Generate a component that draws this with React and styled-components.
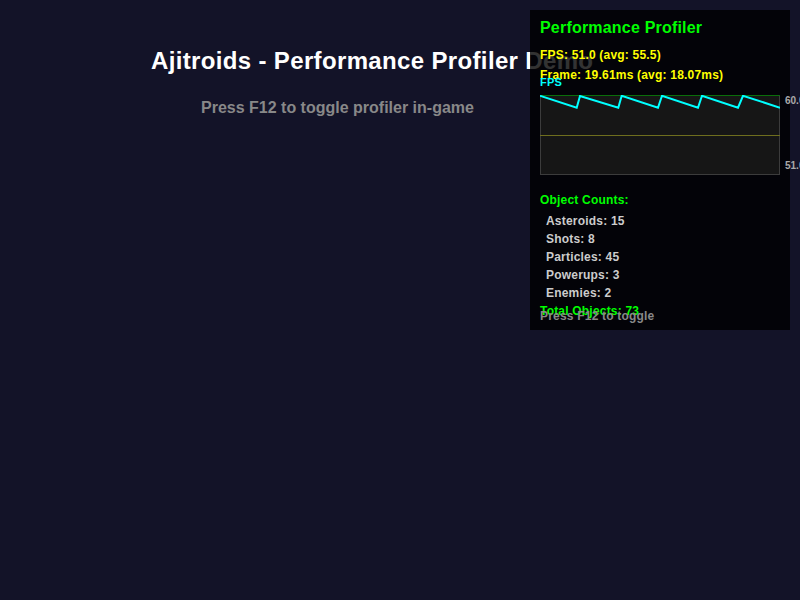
import React from 'react'
import styled, { createGlobalStyle } from 'styled-components'

const GlobalStyle = createGlobalStyle`
  html, body {
    margin: 0;
    padding: 0;
    background: #131328;
    overflow: hidden;
  }
  body {
    font-family: "Liberation Sans", Arial, sans-serif;
  }
`

const Page = styled.div`
  position: relative;
  width: 800px;
  height: 600px;
  overflow: hidden;
  background: #131328;
  padding-top: 40px;
  box-sizing: border-box;
`

const Title = styled.h1`
  margin: 0 0 0 151px;
  height: 42px;
  line-height: 42px;
  font-size: 24px;
  font-weight: bold;
  letter-spacing: 0.35px;
  color: #ffffff;
  white-space: nowrap;
`

const Subtitle = styled.p`
  margin: 0 0 0 201px;
  height: 52px;
  line-height: 52px;
  font-size: 16px;
  font-weight: bold;
  color: #888888;
  white-space: nowrap;
`

const Panel = styled.aside`
  position: absolute;
  top: 10px;
  right: 10px;
  width: 260px;
  height: 320px;
  box-sizing: border-box;
  padding: 0 10px;
  background: rgba(0, 0, 0, 0.8);
  display: flex;
  flex-direction: column;
`

const Line = styled.div`
  height: ${(p) => p.$h}px;
  line-height: ${(p) => p.$h}px;
  margin-top: ${(p) => p.$mt || 0}px;
  padding-left: ${(p) => p.$indent || 0}px;
  font-size: ${(p) => p.$size}px;
  font-weight: bold;
  letter-spacing: 0.2px;
  color: ${(p) => p.$color};
  white-space: nowrap;
  position: relative;
`

const ChartRow = styled.div`
  display: flex;
  gap: 5px;
  margin-top: 8px;
  height: 80px;
`

const ChartBox = styled.svg`
  flex-shrink: 0;
  display: block;
`

const Axis = styled.div`
  display: flex;
  flex-direction: column;
  justify-content: space-between;
  flex-shrink: 0;
`

const AxisLabel = styled.span`
  display: block;
  height: ${(p) => p.$h}px;
  line-height: ${(p) => p.$h}px;
  font-size: 10px;
  font-weight: bold;
  color: #aaaaaa;
  white-space: nowrap;
`

const Counts = styled.div`
  display: flex;
  flex-direction: column;
  padding-top: 2px;
`

const fpsPoints = [
  [0, 0.8], [36.7, 12.7], [40, 1], [78.3, 12.7], [81.7, 0.8], [118, 12.7],
  [122, 0.8], [158, 12.7], [162, 0.8], [198, 12.7], [203, 0.8], [240, 12.7],
]

const counts = [
  ['Asteroids', 15],
  ['Shots', 8],
  ['Particles', 45],
  ['Powerups', 3],
  ['Enemies', 2],
]

function FpsChart() {
  return (
    <ChartRow>
      <ChartBox width="240" height="80" viewBox="0 0 240 80">
        <rect x="0.5" y="0.5" width="239" height="79" fill="#161616" stroke="#3c3c3c" />
        <line x1="0" y1="0.5" x2="240" y2="0.5" stroke="#0a6e0a" strokeWidth="1" />
        <line x1="0" y1="40.5" x2="240" y2="40.5" stroke="#6e6e1e" strokeWidth="1" />
        <polyline
          points={fpsPoints.map((p) => p.join(',')).join(' ')}
          fill="none"
          stroke="#00ffff"
          strokeWidth="2"
        />
      </ChartBox>
      <Axis>
        <AxisLabel $h={11}>60.0</AxisLabel>
        <AxisLabel $h={19}>51.0</AxisLabel>
      </Axis>
    </ChartRow>
  )
}

export default function App() {
  const total = counts.reduce((s, c) => s + c[1], 0)
  return (
    <Page>
      <GlobalStyle />
      <Title>Ajitroids - Performance Profiler Demo</Title>
      <Subtitle>Press F12 to toggle profiler in-game</Subtitle>

      <Panel>
        <Line $h={35} $size={16} $color="#00ff00">Performance Profiler</Line>
        <Line $h={21} $size={12} $color="#ffff00">FPS: 51.0 (avg: 55.5)</Line>
        <Line $h={19} $size={12} $color="#ffff00">Frame: 19.61ms (avg: 18.07ms)</Line>
        <Line $h={10} $mt={-8} $size={11} $color="#00ffff">FPS</Line>
        <FpsChart />
        <Line $h={19} $mt={16} $size={12} $color="#00ff00">Object Counts:</Line>
        <Counts>
          {counts.map(([name, n]) => (
            <Line key={name} $h={18} $indent={6} $size={12} $color="#cccccc">
              {name}: {n}
            </Line>
          ))}
        </Counts>
        <Line $h={18} $size={12} $color="#00ff00">Total Objects: {total}</Line>
        <Line $h={10} $mt={-9} $size={12} $color="#888888">Press F12 to toggle</Line>
      </Panel>
    </Page>
  )
}
